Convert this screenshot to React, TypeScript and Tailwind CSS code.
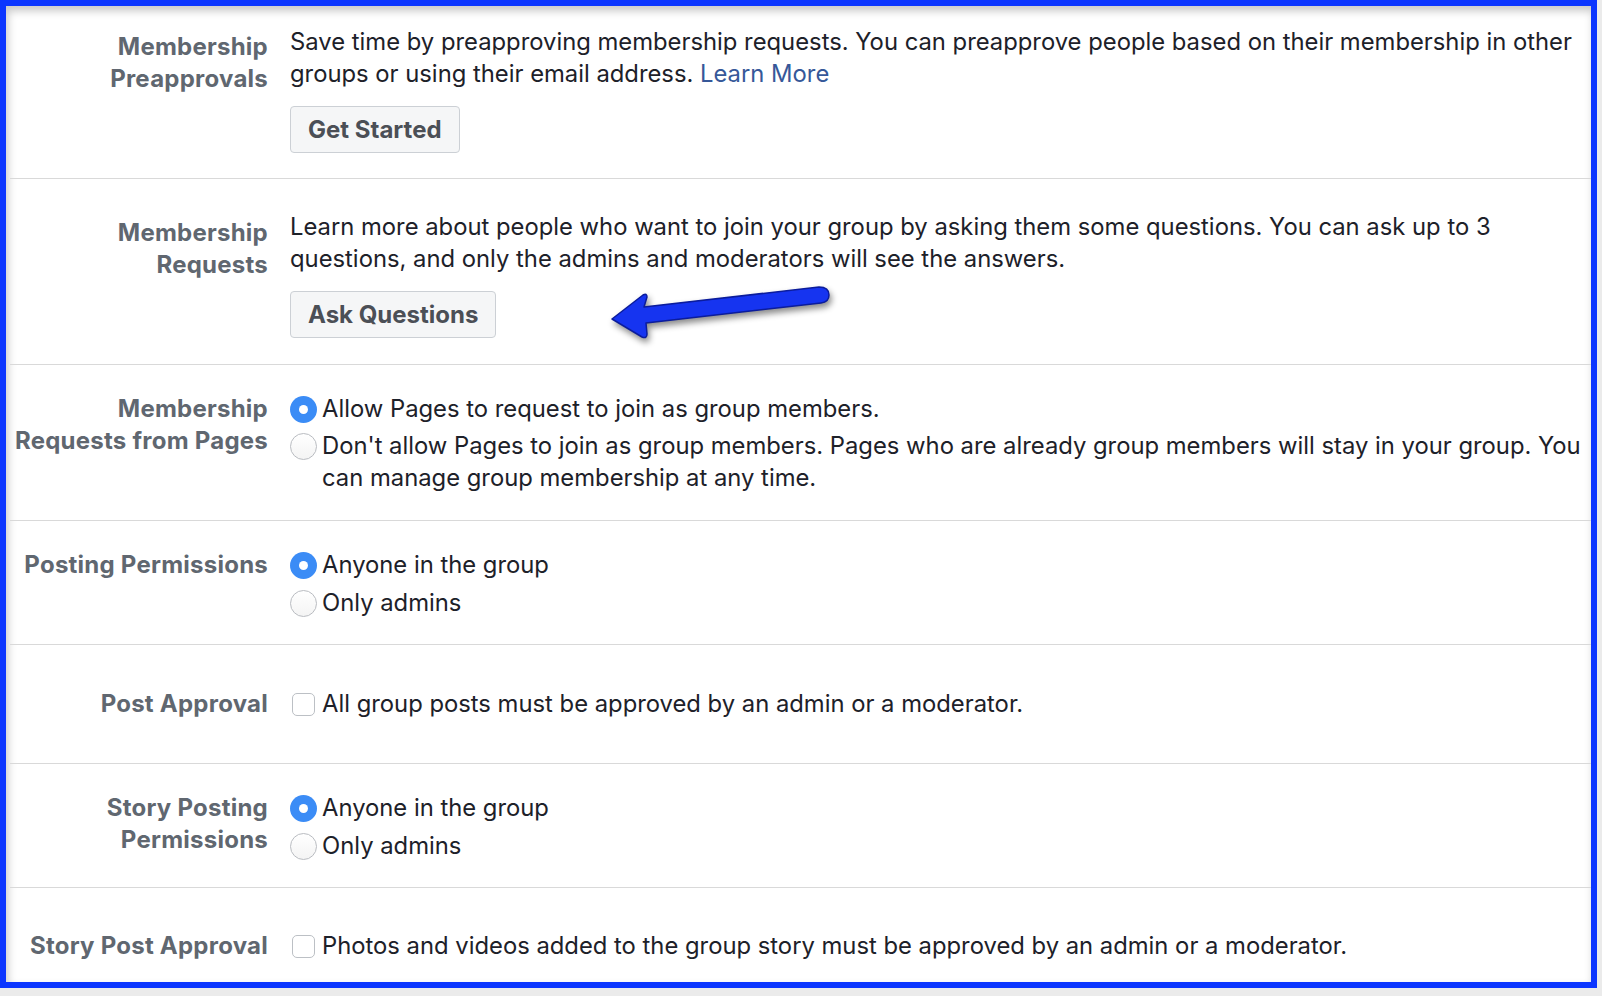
import React from "react";

const font = { fontFamily: 'Inter, "Liberation Sans", Arial, sans-serif' };

function Radio({ checked }: { checked?: boolean }) {
  return checked ? (
    <span className="mt-[3px] flex size-[27px] shrink-0 items-center justify-center rounded-full bg-[#3b8cf6]">
      <span className="size-[9px] rounded-full bg-white" />
    </span>
  ) : (
    <span className="mt-[3px] size-[27px] shrink-0 rounded-full border border-[#b9bcc1] bg-gradient-to-b from-white to-[#f4f4f4]" />
  );
}

function Checkbox() {
  return <span className="mt-[5px] ml-[2px] size-[23px] shrink-0 rounded-[5px] border border-[#bcc0c5] bg-white" />;
}

function Option({ checked, children, className = "" }: { checked?: boolean; children: React.ReactNode; className?: string }) {
  return (
    <div className={"flex items-start gap-[5px] " + className}>
      <Radio checked={checked} />
      <div className="whitespace-nowrap">{children}</div>
    </div>
  );
}

function Row({ label, labelClass = "", className = "", children }: { label: React.ReactNode; labelClass?: string; className?: string; children: React.ReactNode }) {
  return (
    <div className={"ml-[4px] flex border-b border-[#d9d9d9] " + className}>
      <div className={"w-[258px] shrink-0 whitespace-nowrap text-right text-[24px] font-bold tracking-[0.01em] text-[#606770] " + labelClass}>{label}</div>
      <div className="ml-[22px] text-[#1d2129]">{children}</div>
    </div>
  );
}

function Button({ children }: { children: React.ReactNode }) {
  return (
    <button className="mt-[16px] h-[47px] rounded-[4px] border border-[#ccd0d5] bg-[#f5f6f7] px-[17px] text-[24px] font-bold text-[#4b4f56]">
      {children}
    </button>
  );
}

export default function App() {
  return (
    <div className="min-h-screen bg-[#ebebeb]" style={font}>
      <div className="relative h-[988px] w-[1597px] border-[6px] border-[#0c36ff] bg-white text-[23.8px] leading-[32px] shadow-[inset_2px_5px_8px_rgba(0,0,0,0.22)]">
        <Row label={<>Membership<br />Preapprovals</>} labelClass="mt-[5px]" className="pt-[20px] pb-[25px]">
          <div className="whitespace-nowrap">
            Save time by preapproving membership requests. You can preapprove people based on their membership in other
            <br />
            groups or using their email address. <span className="text-[#365899]">Learn More</span>
          </div>
          <Button>Get Started</Button>
        </Row>

        <Row label={<>Membership<br />Requests</>} labelClass="mt-[6px]" className="pt-[32px] pb-[26px]">
          <div className="whitespace-nowrap">
            Learn more about people who want to join your group by asking them some questions. You can ask up to 3
            <br />
            questions, and only the admins and moderators will see the answers.
          </div>
          <Button>Ask Questions</Button>
        </Row>

        <Row label={<>Membership<br />Requests from Pages</>} className="pt-[28px] pb-[26px]">
          <Option checked>Allow Pages to request to join as group members.</Option>
          <Option className="mt-[5px]">
            Don't allow Pages to join as group members. Pages who are already group members will stay in your group. You
            <br />
            can manage group membership at any time.
          </Option>
        </Row>

        <Row label="Posting Permissions" className="pt-[28px] pb-[25px]">
          <Option checked>Anyone in the group</Option>
          <Option className="mt-[6px]">Only admins</Option>
        </Row>

        <Row label="Post Approval" className="h-[119px] items-center">
          <div className="flex items-start gap-[7px] whitespace-nowrap">
            <Checkbox />
            All group posts must be approved by an admin or a moderator.
          </div>
        </Row>

        <Row label={<>Story Posting<br />Permissions</>} className="pt-[28px] pb-[25px]">
          <Option checked>Anyone in the group</Option>
          <Option className="mt-[6px]">Only admins</Option>
        </Row>

        <Row label="Story Post Approval" className="items-center border-b-0 pt-[42px]">
          <div className="flex items-start gap-[7px] whitespace-nowrap">
            <Checkbox />
            Photos and videos added to the group story must be approved by an admin or a moderator.
          </div>
        </Row>

        {/* annotation arrow */}
        <svg className="absolute left-[587px] top-[268px] drop-shadow-[2px_4px_3px_rgba(0,0,0,0.45)]" width="250" height="80" viewBox="0 0 250 80">
          <path
            d="M19 45 L50 21 Q54 19 54 23 L51 33 L226 13 Q236 13 236 21 Q236 28 228 29 L53 49 L54 60 Q54 65 49 63 Z"
            fill="#1634f0"
            stroke="#0b1c9c"
            strokeWidth="1.5"
            strokeLinejoin="round"
          />
        </svg>
      </div>
    </div>
  );
}
